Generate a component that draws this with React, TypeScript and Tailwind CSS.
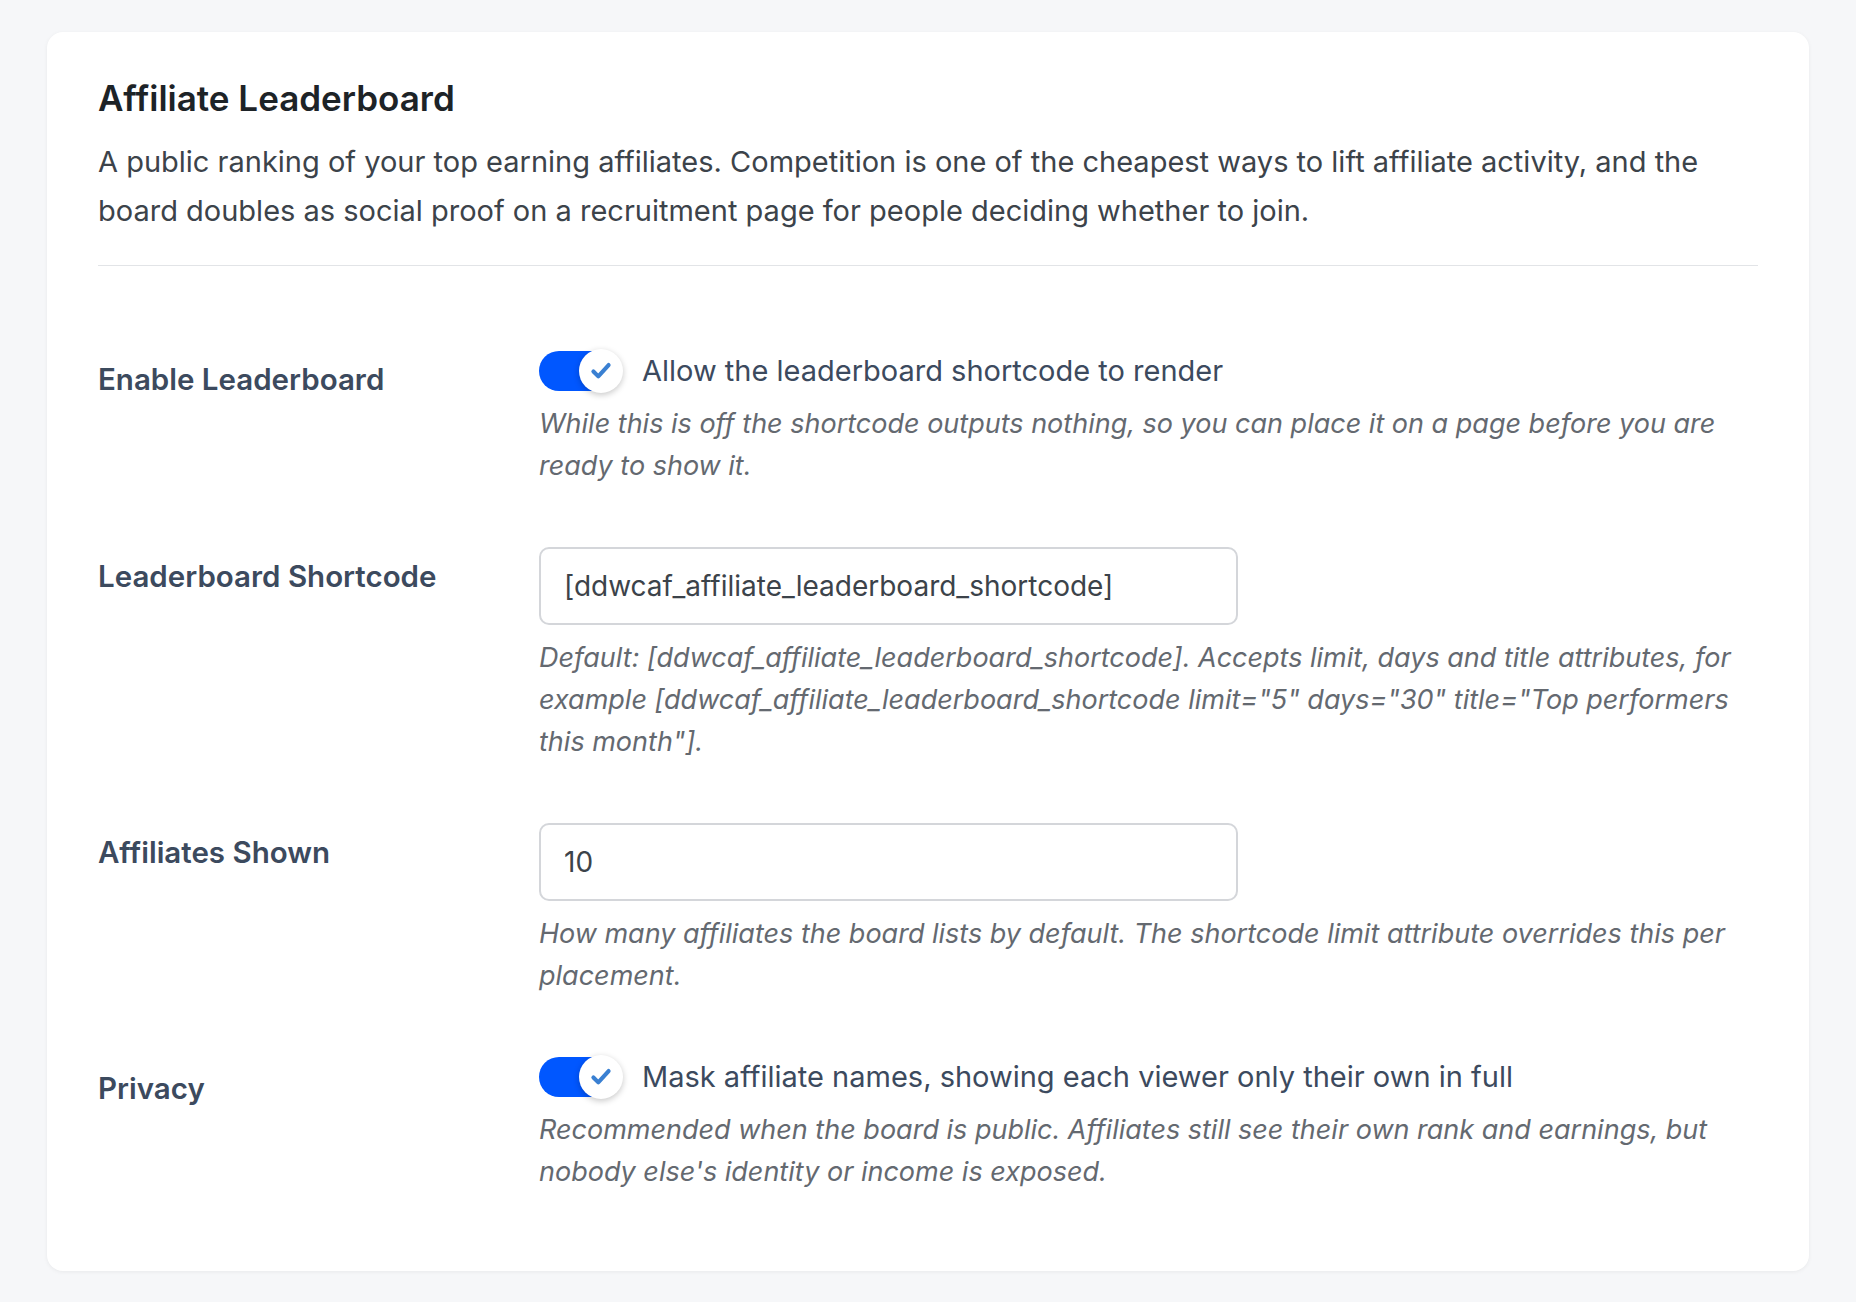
function Toggle() {
  return (
    <div className="relative h-[40px] w-[80px] shrink-0 rounded-full bg-[#0057ff]">
      <div className="absolute -right-[4px] -top-[2px] flex h-[44px] w-[44px] items-center justify-center rounded-full bg-white shadow-[0_2px_6px_rgba(0,0,0,0.22)]">
        <svg width="26" height="26" viewBox="0 0 24 24" fill="none" stroke="#3a80d2" strokeWidth="3.8" strokeLinecap="round" strokeLinejoin="round">
          <path d="M5 12.5l4.5 4.5L19 6.5" />
        </svg>
      </div>
    </div>
  )
}

function Help({ children }: { children: React.ReactNode }) {
  return <p className="mt-[12px] text-[27px] leading-[42px] italic text-[#646970]">{children}</p>
}

function Row({ label, labelPad, children }: { label: string; labelPad: string; children: React.ReactNode }) {
  return (
    <div className="flex">
      <div className={`w-[441px] shrink-0 text-[29.5px] leading-[36px] font-semibold text-[#3c4a5e] ${labelPad}`}>{label}</div>
      <div className="flex-1 pr-[6px]">{children}</div>
    </div>
  )
}

export default function App() {
  return (
    <div className="min-h-[1302px] bg-[#f6f7f9] px-[47px] pt-[32px] font-['Inter','Liberation_Sans',sans-serif]">
      <div className="rounded-[16px] bg-white px-[51px] pt-[44px] pb-[78px] shadow-[0_1px_4px_rgba(0,0,0,0.06)]">
        {/* Header */}
        <h2 className="text-[35px] leading-[44px] font-semibold text-[#1d2327]">Affiliate Leaderboard</h2>
        <p className="mt-[17px] text-[29px] leading-[49px] text-[#3c434a]">
          A public ranking of your top earning affiliates. Competition is one of the cheapest ways to lift affiliate activity, and the
          board doubles as social proof on a recruitment page for people deciding whether to join.
        </p>
        <div className="mt-[30px] h-px bg-[#e2e4e7]" />

        <div className="mt-[85px] flex flex-col gap-[60px]">
          {/* Enable */}
          <Row label="Enable Leaderboard" labelPad="pt-[10px]">
            <div className="flex h-[40px] items-center gap-[23px]">
              <Toggle />
              <span className="text-[29px] text-[#3c4a5e]">Allow the leaderboard shortcode to render</span>
            </div>
            <Help>
              While this is off the shortcode outputs nothing, so you can place it on a page before you are ready to show it.
            </Help>
          </Row>

          {/* Shortcode */}
          <Row label="Leaderboard Shortcode" labelPad="pt-[11px]">
            <div className="flex h-[78px] w-[699px] items-center rounded-[10px] border-2 border-[#d4d6da] px-[23px] text-[28px] text-[#3c434a]">
              [ddwcaf_affiliate_leaderboard_shortcode]
            </div>
            <Help>
              Default: [ddwcaf_affiliate_leaderboard_shortcode]. Accepts limit, days and title attributes, for example
              [ddwcaf_affiliate_leaderboard_shortcode limit="5" days="30" title="Top performers this month"].
            </Help>
          </Row>

          {/* Affiliates shown */}
          <Row label="Affiliates Shown" labelPad="pt-[11px]">
            <div className="flex h-[78px] w-[699px] items-center rounded-[10px] border-2 border-[#d4d6da] px-[23px] text-[28px] text-[#3c434a]">
              10
            </div>
            <Help>How many affiliates the board lists by default. The shortcode limit attribute overrides this per placement.</Help>
          </Row>

          {/* Privacy */}
          <Row label="Privacy" labelPad="pt-[13px]">
            <div className="flex h-[40px] items-center gap-[23px]">
              <Toggle />
              <span className="text-[29px] text-[#3c4a5e]">Mask affiliate names, showing each viewer only their own in full</span>
            </div>
            <Help>
              Recommended when the board is public. Affiliates still see their own rank and earnings, but nobody else's identity or
              income is exposed.
            </Help>
          </Row>
        </div>
      </div>
    </div>
  )
}
